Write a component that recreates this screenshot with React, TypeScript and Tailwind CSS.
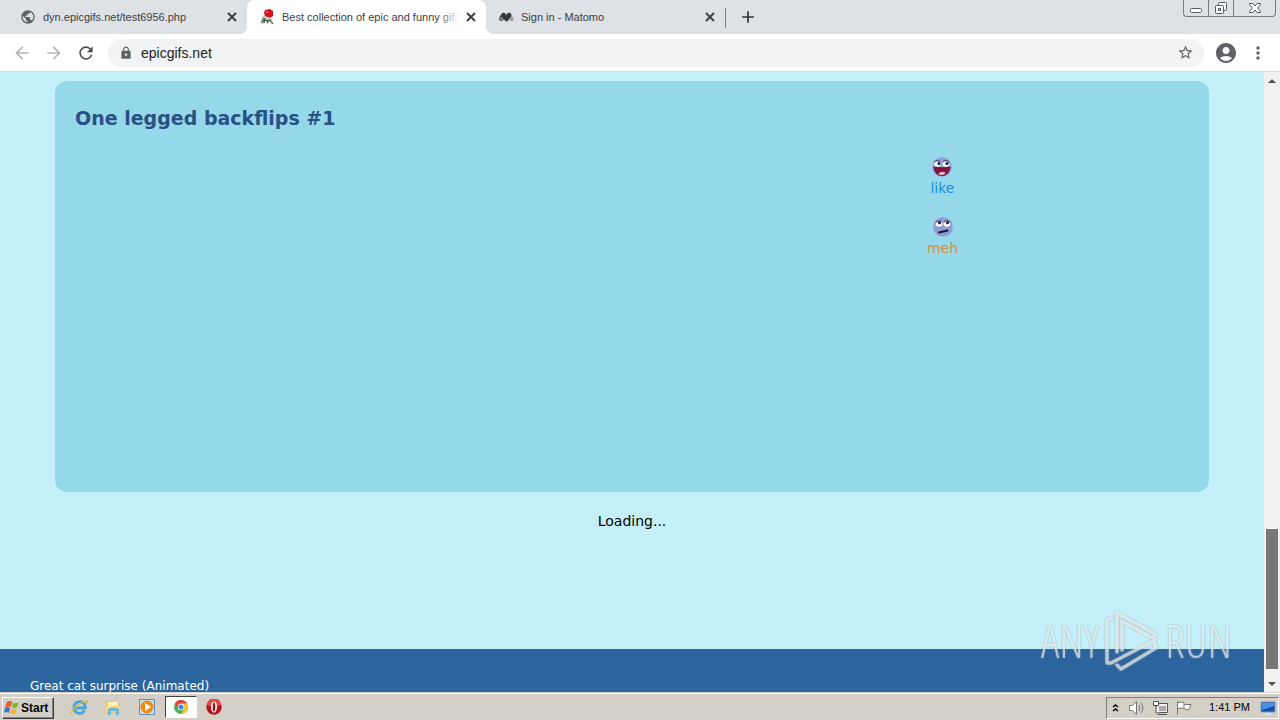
import React from "react";
import { MdArrowBack, MdArrowForward, MdRefresh, MdLock, MdStarBorder, MdAccountCircle, MdMoreVert, MdAdd, MdPublic } from "react-icons/md";

function RedFavicon() {
  return (
    <svg viewBox="0 0 16 16" className="size-4 shrink-0" aria-hidden="true">
      <path d="M3 8l3-2 3 3 4 1 1 5h-2l-1-3-2 3H8l-1-3-2 3H2l2-3-2-1z" fill="#c3cbc4" />
      <path d="M5 9l-3 5M6 9l-1 5M9 11l-1 3M10 10l4 5M5 11l6 1M3 12h2" stroke="#3a4a3e" fill="none" />
      <path d="M6 1l5-1 3 2v5l-3 2-5-2-1-3z" fill="#d3151a" />
      <circle cx="8" cy="3" r="1" fill="#ef6664" />
    </svg>
  );
}

function MatomoIcon() {
  return (
    <svg viewBox="0 0 16 16" className="size-4 shrink-0" aria-hidden="true">
      <path d="M11 6l2.500 4" stroke="#9a9da1" strokeWidth="4" strokeLinecap="round" />
      <path d="M3.400 9.500L5.500 6l3 4 2.500-4" fill="none" stroke="#35383c" strokeWidth="4.500" strokeLinecap="round" strokeLinejoin="round" />
      <circle cx="3" cy="10" r="2.200" fill="#777a7d" />
    </svg>
  );
}

function Tab({ icon, title, active }: { icon: React.ReactNode; title: string; active?: boolean }) {
  return (
    <div className={active ? "relative flex h-full w-[239px] items-center rounded-t-lg bg-white pr-[7px] pl-3" : "relative flex h-full w-[239px] items-center pr-[7px] pl-3"}>
      {active && (
        <>
          <span className="absolute bottom-0 -left-2 size-2 bg-[radial-gradient(circle_at_0_0,#dee1e6_8px,white_8px)]" />
          <span className="absolute -right-2 bottom-0 size-2 bg-[radial-gradient(circle_at_100%_0,#dee1e6_8px,white_8px)]" />
        </>
      )}
      {icon}
      <a href="#top" className="relative ml-[7px] min-w-0 flex-1 overflow-hidden font-['Liberation_Sans',sans-serif] text-[11px] leading-4 whitespace-nowrap text-[#3c4043]">
        {title}
        {active && <span className="absolute inset-y-0 right-0 w-5 bg-linear-to-r from-transparent to-white" />}
      </a>
      <button aria-label={"Close " + title} className="ml-1 flex size-4 items-center justify-center text-[#3c4043]">
        <svg viewBox="0 0 10 10" className="size-2.5" stroke="currentColor" strokeWidth="2"><path d="M1 1l8 8M9 1L1 9" /></svg>
      </button>
    </div>
  );
}

function WindowControls() {
  return (
    <div className="ml-auto flex h-[17px] w-[93px] self-start rounded-b border border-t-0 border-[#777b84] text-[#555a64]">
      <button aria-label="Minimize" className="flex w-[25px] items-center justify-center border-r border-[#777b84]">
        <svg viewBox="0 0 14 14" className="size-3.5"><rect x="1.500" y="7.500" width="11" height="4" rx="1" fill="#fff" stroke="currentColor" /></svg>
      </button>
      <button aria-label="Restore" className="flex w-[25px] items-center justify-center border-r border-[#777b84]">
        <svg viewBox="0 0 14 14" className="size-3.5" fill="#fff" stroke="currentColor"><rect x="4.500" y="1.500" width="8" height="8" rx="1" /><rect x="1.500" y="4.500" width="8" height="8" rx="1" /><rect x="4.500" y="7.500" width="2" height="2" /></svg>
      </button>
      <button aria-label="Close window" className="flex flex-1 items-center justify-center">
        <svg viewBox="0 0 14 14" className="size-3.5"><path d="M1.500 2.500h3.500L7 5l2-2.500h3.500v1L9.500 7l3 3.500v1H9L7 9l-2 2.500H1.500v-1l3-3.500-3-3.500z" fill="#fff" stroke="currentColor" /></svg>
      </button>
    </div>
  );
}

function LikeFace() {
  return (
    <svg viewBox="0 0 20 20" className="size-5" aria-hidden="true">
      <circle cx="10" cy="10" r="9.800" fill="#8f9bd8" />
      <path d="M2 10c2 1 14 1 16 0-.5 5-3.500 8.500-8 8.500S2.500 15 2 10z" fill="#8c1238" stroke="#3c1230" strokeWidth=".8" />
      <path d="M6.500 16.500c1-2 6-2 7-.5-1 2-5 3-7 .5z" fill="#f0bcc8" />
      <ellipse cx="5.500" cy="7" rx="3.500" ry="2.800" fill="#fff" /><ellipse cx="14" cy="7" rx="3.500" ry="2.800" fill="#fff" />
      <path d="M2 5.500Q5 2 8 5M11 5q3-3 6.500.5" fill="none" stroke="#303452" />
      <circle cx="7" cy="6.500" r="1.500" fill="#171b2d" /><circle cx="15" cy="6.500" r="1.500" fill="#171b2d" />
    </svg>
  );
}

function MehFace() {
  return (
    <svg viewBox="0 0 20 20" className="size-5" aria-hidden="true">
      <circle cx="10" cy="10" r="9.800" fill="#8f9bd8" />
      <ellipse cx="6" cy="7" rx="3.400" ry="2.800" fill="#fff" /><ellipse cx="14" cy="7" rx="3.400" ry="2.800" fill="#fff" />
      <path d="M2.500 5.500Q5 2.500 8.500 5M11 5q3-3 6.500.5" fill="none" stroke="#303452" />
      <circle cx="6.500" cy="5.800" r="1.500" fill="#171b2d" /><circle cx="14.500" cy="5.800" r="1.500" fill="#171b2d" />
      <path d="M6 15.500l8.500-2" stroke="#171b2d" strokeWidth="2" strokeLinecap="round" />
    </svg>
  );
}

function Watermark() {
  return (
    <div aria-hidden="true" className="pointer-events-none absolute right-12 bottom-12 flex h-16 items-center gap-1 font-['Open_Sans_Condensed_Light','Open_Sans_Condensed','Liberation_Sans_Narrow','DejaVu_Sans_Condensed',sans-serif] text-[46px] leading-none font-light text-white/60 drop-shadow-[0_0_1px_#80929c]">
      <span>ANY</span>
      <svg viewBox="0 0 58 64" className="h-16 w-[58px]" fill="none" stroke="currentColor" strokeWidth="3.500" strokeLinejoin="round" strokeLinecap="round">
        <path d="M8 10l-4 2v43h4l44-23M14 44V5l38 21-2 4-31-17v29M14 57l4 4 35-21-2-5" />
      </svg>
      <span>RUN</span>
    </div>
  );
}

function Page() {
  return (
    <div className="relative flex min-h-0 flex-1">
      <main id="top" className="flex min-w-0 flex-1 flex-col overflow-hidden bg-[#c4f0f9] font-['DejaVu_Sans',sans-serif]">
        <section className="mx-[55px] mt-[9px] h-[411px] shrink-0 rounded-xl bg-[#95d8ea] px-5 pt-6">
          <h2 className="text-[19px] leading-[26px] font-bold text-[#285184]">One legged backflips #1</h2>
          <div className="mt-[26px] ml-[75%] flex w-16 flex-col items-center gap-[18px] text-sm leading-[22px]">
            <a href="#like" className="flex flex-col items-center text-[#1a8fd8]"><LikeFace />like</a>
            <a href="#meh" className="flex flex-col items-center text-[#d7923c]"><MehFace />meh</a>
          </div>
        </section>
        <p className="mt-[19px] text-center text-sm leading-5 text-black">Loading...</p>
        <footer className="mt-auto h-[43px] shrink-0 bg-[#2c659d] px-[30px] pt-[30px]">
          <a href="#great-cat" className="block text-xs leading-[14px] text-white">Great cat surprise (Animated)</a>
        </footer>
      </main>
      <div className="flex w-4 flex-col items-center bg-[#f1f1f1] text-[#505050]">
        <button aria-label="Scroll up" className="flex h-[17px] w-4 items-center justify-center"><svg viewBox="0 0 8 4" className="h-1 w-2" fill="currentColor"><path d="M0 4l4-4 4 4z" /></svg></button>
        <div className="mt-auto h-[140px] w-3 bg-[#787878]" />
        <button aria-label="Scroll down" className="mt-[6px] flex h-[17px] w-4 items-center justify-center"><svg viewBox="0 0 8 4" className="h-1 w-2" fill="currentColor"><path d="M0 0h8L4 4z" /></svg></button>
      </div>
    </div>
  );
}

function Taskbar() {
  return (
    <footer className="flex h-7 shrink-0 items-center border-t border-[#d4d0c8] bg-[#d4d0c8] pr-px pl-0.5 text-black shadow-[inset_0_1px_0_white]">
      <button className="mt-0.5 flex h-[22px] w-[52px] items-center gap-px border border-t-white border-r-[#404040] border-b-[#404040] border-l-white pl-px font-['Liberation_Sans',sans-serif] text-xs font-bold shadow-[inset_-1px_-1px_0_#808080]">
        <svg viewBox="0 0 16 16" className="size-4 shrink-0"><path d="M3 2q3-2 5 0L7 7Q4 6 1 7z" fill="#ef5b2b" /><path d="M9 3q3 1 6-1l-2 5q-3 2-5 0z" fill="#7db72f" /><path d="M1 8q3-2 5 0l-1 5q-3-2-5 0z" fill="#3479c7" /><path d="M7 9q3 1 6-1l-2 6q-3 1-5-1z" fill="#f4b52d" /></svg>
        Start
      </button>
      <nav className="ml-4 flex items-center" aria-label="Quick launch">
        <button aria-label="Internet Explorer"><svg viewBox="0 0 18 18" className="size-[18px]" fill="none"><path d="M14.500 12.500c-3 5-10.500 3-10.500-3s8-8 10.500-3c1 2 .8 2.500.8 3.500H6" stroke="#43a6e0" strokeWidth="2.800" /><path d="M3 16c-4 1-1-5 5-9s11-6 8.500-1" stroke="#e5b82c" strokeWidth="1.400" /></svg></button>
        <button aria-label="Explorer" className="ml-4"><svg viewBox="0 0 18 18" className="size-[18px]"><path d="M2 3h6l1 2h7v10H2z" fill="#f0c95d" /><path d="M4 4h10v7H4z" fill="#fff4bd" /><path d="M2 8h14v6H2z" fill="#f3d77f" /><path d="M4 17v-6q5-3 11 0v6h-3v-4H7v4z" fill="#6db5da" /></svg></button>
        <button aria-label="Media Player" className="ml-4"><svg viewBox="0 0 18 18" className="size-[18px]"><path d="M1.500 1.500h15v15h-15z" fill="#c6dff0" stroke="#5c91bb" /><circle cx="9" cy="9" r="6.500" fill="#f48a16" /><path d="M7 5l6 4-6 4z" fill="#fff" /></svg></button>
        <button aria-label="Chrome" className="ml-[9px] flex h-[22px] w-8 items-center justify-center border border-t-[#404040] border-r-white border-b-white border-l-[#404040] bg-white">
          <svg viewBox="0 0 14 14" className="size-3.5"><circle cx="7" cy="7" r="7" fill="#4caf50" /><path d="M.9 3.500A7 7 0 0113.100 3.500H7L4 8.700z" fill="#e6443c" /><path d="M13.100 3.500A7 7 0 017 14l3-5.200-3-5.300z" fill="#fbc02d" /><circle cx="7" cy="7" r="3.200" fill="#fff" /><circle cx="7" cy="7" r="2.500" fill="#4285f4" /></svg>
        </button>
        <button aria-label="Opera" className="ml-[9px]"><svg viewBox="0 0 16 16" className="size-4"><circle cx="8" cy="8" r="7.700" fill="#b5151b" /><path d="M1 6a7 7 0 0114 0Q8 9 1 6" fill="#dd4e4c" /><ellipse cx="8" cy="8" rx="3" ry="5.500" fill="#fff" /><ellipse cx="8" cy="8" rx="1.300" ry="4.500" fill="#981217" /></svg></button>
      </nav>
      <div className="mt-0.5 ml-auto flex h-[22px] w-[173px] items-center border border-t-[#808080] border-r-white border-b-white border-l-[#808080] pl-1">
        <button aria-label="Show hidden icons"><svg viewBox="0 0 9 10" className="h-2.5 w-[9px]" fill="none" stroke="black" strokeWidth="1.500"><path d="M2 4l2.500-2L7 4M2 8l2.500-2L7 8" /></svg></button>
        <svg viewBox="0 0 18 16" className="ml-2 h-4 w-[18px]" fill="none" stroke="#777"><path d="M1.500 5.500h3l4-4v13l-4-4h-3z" fill="white" /><path d="M11 5q2 3 0 6M13 3q4 5 0 10" /></svg>
        <svg viewBox="0 0 18 16" className="ml-1.5 h-4 w-[18px]" fill="none" stroke="#555"><path d="M4.500 3.500h11v9h-11zM6 14.500h9" fill="#eee" /><path d="M1.500 1.500h5v4h-5zM4 6v7h3" fill="#fff" /><path d="M7 6h7v5H7z" fill="#aaa" stroke="none" /></svg>
        <svg viewBox="0 0 16 16" className="ml-1.5 size-4" fill="white" stroke="#777"><path d="M1.500 1v14M2 2.500q3-1 6 0v6q-3-1-6 0M8 4.500h7l-2 5q-3 1-5-1" /></svg>
        <time className="mr-2.5 ml-auto font-['Liberation_Sans',sans-serif] text-[11px]">1:41 PM</time>
        <svg viewBox="0 0 16 16" className="mr-0.5 size-4"><path d="M1 2h14v10H1z" fill="#164fa5" stroke="#7b9fc9" /><path d="M2 3h12v3L2 10z" fill="#4b90df" /><path d="M5 13h6v2H5z" fill="#d4e6f5" /></svg>
      </div>
    </footer>
  );
}

export default function App() {
  return (
    <div className="flex h-screen flex-col overflow-hidden bg-white font-['Noto_Sans','DejaVu_Sans',sans-serif]">
      <header className="shrink-0">
        <div className="flex h-[34px] bg-[#dee1e6] pr-1 pl-2">
          <Tab icon={<MdPublic size={16} className="shrink-0 text-[#5f6368]" />} title="dyn.epicgifs.net/test6956.php" />
          <Tab icon={<RedFavicon />} title="Best collection of epic and funny gifs" active />
          <Tab icon={<MatomoIcon />} title="Sign in - Matomo" />
          <span className="mt-2 h-5 w-px bg-[#808389]" />
          <button aria-label="New tab" className="ml-3 text-[#303338]"><MdAdd size={20} /></button>
          <WindowControls />
        </div>
        <div className="flex h-[38px] items-center border-b border-[#d9dfe1] bg-white px-3 text-[#5f6368]">
          <button aria-label="Back" className="text-[#b5b7ba]"><MdArrowBack size={20} /></button>
          <button aria-label="Forward" className="ml-3 text-[#b5b7ba]"><MdArrowForward size={20} /></button>
          <button aria-label="Reload" className="ml-3 text-[#505357]"><MdRefresh size={20} /></button>
          <div className="ml-3 flex h-7 flex-1 items-center rounded-full bg-[#f1f3f4] pr-2.5 pl-[11px]">
            <MdLock size={14} />
            <input aria-label="Address" defaultValue="epicgifs.net" className="ml-2 min-w-0 flex-1 bg-transparent font-['Liberation_Sans',sans-serif] text-sm text-[#202124] outline-none" />
            <button aria-label="Bookmark"><MdStarBorder size={17} /></button>
          </div>
          <button aria-label="Profile" className="ml-2.5"><MdAccountCircle size={24} /></button>
          <button aria-label="Menu" className="ml-2.5"><MdMoreVert size={20} /></button>
        </div>
      </header>
      <Page />
      <Taskbar />
      <Watermark />
    </div>
  );
}
